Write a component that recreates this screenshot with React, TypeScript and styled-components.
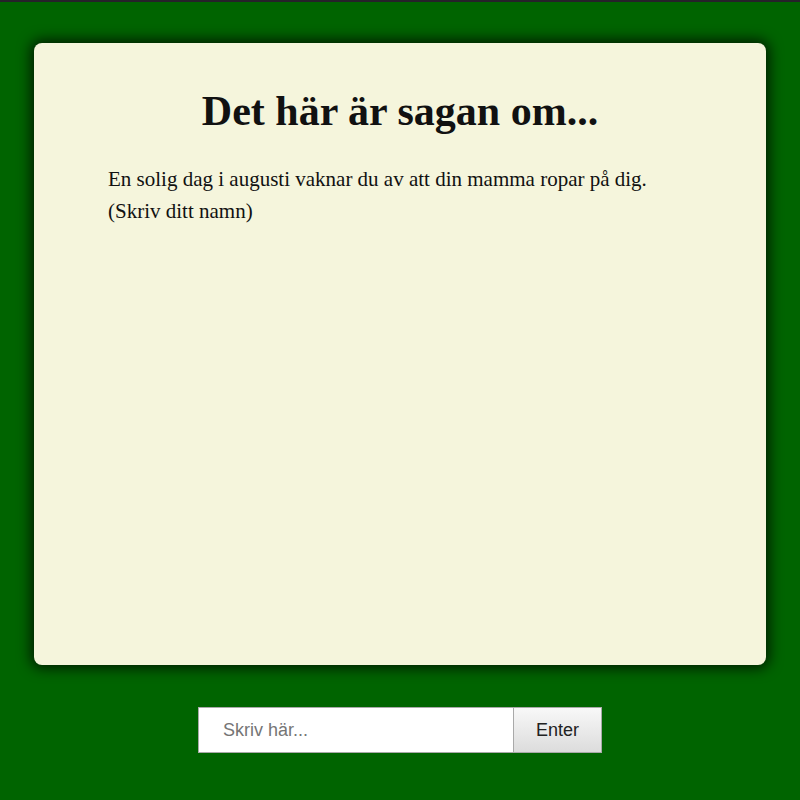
import styled, { createGlobalStyle } from 'styled-components';

const GlobalStyle = createGlobalStyle`
    html, body {
        margin: 0;
        padding: 0;
        background: #006400;
    }
    #root {
        min-height: 100vh;
    }
`;

export default function App() {
    return (
        <>
            <GlobalStyle />
            <Page>
                <StoryCard>
                    <Title>Det här är sagan om...</Title>
                    <StoryText>
                        En solig dag i augusti vaknar du av att din mamma ropar på dig.
                        <br />
                        (Skriv ditt namn)
                    </StoryText>
                </StoryCard>
                <InputRow>
                    <TextInput type="text" placeholder="Skriv här..." />
                    <EnterButton>Enter</EnterButton>
                </InputRow>
            </Page>
        </>
    );
}

const Page = styled.div`
    min-height: 800px;
    box-sizing: border-box;
    border-top: 2px solid #26222a;
    background: #006400;
    display: flex;
    flex-direction: column;
    align-items: center;
    padding-top: 41px;
`;

const StoryCard = styled.div`
    width: 732px;
    height: 622px;
    box-sizing: border-box;
    background: #f5f5dc;
    border-radius: 8px;
    box-shadow: 0 0 14px 3px rgba(0, 0, 0, 0.75);
    padding-top: 44px;
    font-family: 'Liberation Serif', 'Times New Roman', serif;
    color: #111;
`;

const Title = styled.h1`
    margin: 0 0 28px;
    text-align: center;
    font-size: 42px;
    font-weight: bold;
    line-height: 48px;
`;

const StoryText = styled.p`
    margin: 0 74px;
    font-size: 21px;
    line-height: 32px;
`;

const InputRow = styled.div`
    display: flex;
    margin-top: 42px;
    font-family: 'Liberation Sans', Arial, sans-serif;
`;

const TextInput = styled.input`
    width: 315px;
    height: 46px;
    box-sizing: border-box;
    border: 1px solid #a9a9a9;
    border-right: none;
    padding: 0 24px;
    font-family: inherit;
    font-size: 18px;
    color: #333;
    outline: none;
    &::placeholder {
        color: #757575;
    }
`;

const EnterButton = styled.button`
    width: 89px;
    height: 46px;
    box-sizing: border-box;
    border: 1px solid #a9a9a9;
    background: linear-gradient(#f8f8f8, #dcdcdc);
    font-family: inherit;
    font-size: 18px;
    color: #222;
    cursor: pointer;
`;
